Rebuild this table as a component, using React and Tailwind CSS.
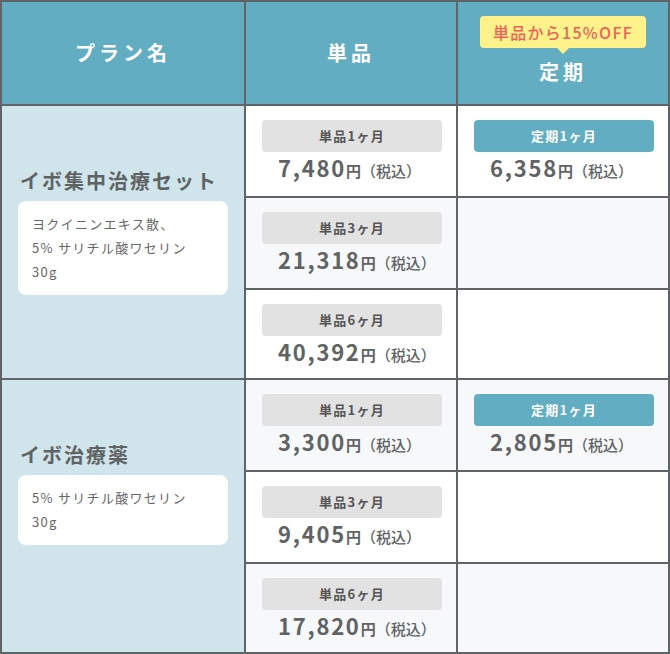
import React from 'react';

// Plan comparison table (イボ治療)
const plans = [
  {
    name: 'イボ集中治療セット',
    desc: ['ヨクイニンエキス散、', '5% サリチル酸ワセリン', '30g'],
    rows: [
      { label: '単品1ヶ月', price: '7,480', sub: { label: '定期1ヶ月', price: '6,358' } },
      { label: '単品3ヶ月', price: '21,318' },
      { label: '単品6ヶ月', price: '40,392' },
    ],
  },
  {
    name: 'イボ治療薬',
    desc: ['5% サリチル酸ワセリン', '30g'],
    rows: [
      { label: '単品1ヶ月', price: '3,300', sub: { label: '定期1ヶ月', price: '2,805' } },
      { label: '単品3ヶ月', price: '9,405' },
      { label: '単品6ヶ月', price: '17,820' },
    ],
  },
];

const font = { fontFamily: '"Noto Sans CJK JP", "Noto Sans", sans-serif' };

const Price = ({ value }) => (
  <div className="h-[30px] leading-[30px] pl-4 whitespace-nowrap text-[#5f6363]">
    <span className="text-[22px] font-bold tracking-[0.08em]">{value}</span>
    <span className="text-[15px] font-bold">円</span>
    <span className="text-[15px] font-medium">（税込）</span>
  </div>
);

const PriceCell = ({ label, price, blue, shaded }) => (
  <div className={`${shaded ? 'bg-[#f7f8fa]' : 'bg-white'} pt-[14px] px-4`}>
    {label && (
      <>
        <div
          className={`w-[180px] h-8 rounded flex items-center justify-center text-[13px] font-bold tracking-[0.1em] ${
            blue ? 'bg-[#62adc1] text-white' : 'bg-[#e2e2e2] text-[#555]'
          }`}
        >
          {label}
        </div>
        <Price value={price} />
      </>
    )}
  </div>
);

const HeadText = ({ children }) => (
  <span className="text-[20px] font-bold tracking-[0.2em] text-white leading-7">{children}</span>
);

export default function App() {
  return (
    <div style={font} className="w-[670px] bg-white">
      <div className="grid grid-cols-[242px_210px_210px] grid-rows-[102px_90px_90px_88px_90px_90px_88px] gap-[2px] p-[2px] bg-[#5f6566]">
        {/* Header */}
        <div className="bg-[#62adc1] flex items-center justify-center">
          <HeadText>プラン名</HeadText>
        </div>
        <div className="bg-[#62adc1] flex items-center justify-center">
          <HeadText>単品</HeadText>
        </div>
        <div className="bg-[#62adc1] flex flex-col items-center pt-[14px]">
          <div className="relative h-8 px-[13px] rounded bg-[#fff28b] flex items-center text-[16px] tracking-[0.08em] text-[#ec6258] font-medium">
            単品から15%OFF
            <span className="absolute left-1/2 -translate-x-1/2 top-full w-0 h-0 border-l-[6px] border-r-[6px] border-t-[6px] border-l-transparent border-r-transparent border-t-[#fff28b]" />
          </div>
          <div className="mt-[10px]">
            <HeadText>定期</HeadText>
          </div>
        </div>

        {plans.map((plan, p) => (
          <React.Fragment key={plan.name}>
            <div className="row-span-3 bg-[#cfe5eb] px-4 pt-[61px]">
              <div className="text-[20px] leading-7 font-bold tracking-[0.1em] text-[#5f6363] pl-[2px]">
                {plan.name}
              </div>
              <div className="mt-[6px] bg-white rounded-lg px-[14px] py-[11px] text-[13px] leading-6 tracking-[0.1em] text-[#666]">
                {plan.desc.map((d) => (
                  <div key={d}>{d}</div>
                ))}
              </div>
            </div>
            {plan.rows.map((r, i) => {
              // alternate row shading across the whole table
              const shaded = (p * 3 + i) % 2 === 1;
              return (
                <React.Fragment key={r.label}>
                  <PriceCell label={r.label} price={r.price} shaded={shaded} />
                  <PriceCell label={r.sub?.label} price={r.sub?.price} blue shaded={shaded} />
                </React.Fragment>
              );
            })}
          </React.Fragment>
        ))}
      </div>
    </div>
  );
}
